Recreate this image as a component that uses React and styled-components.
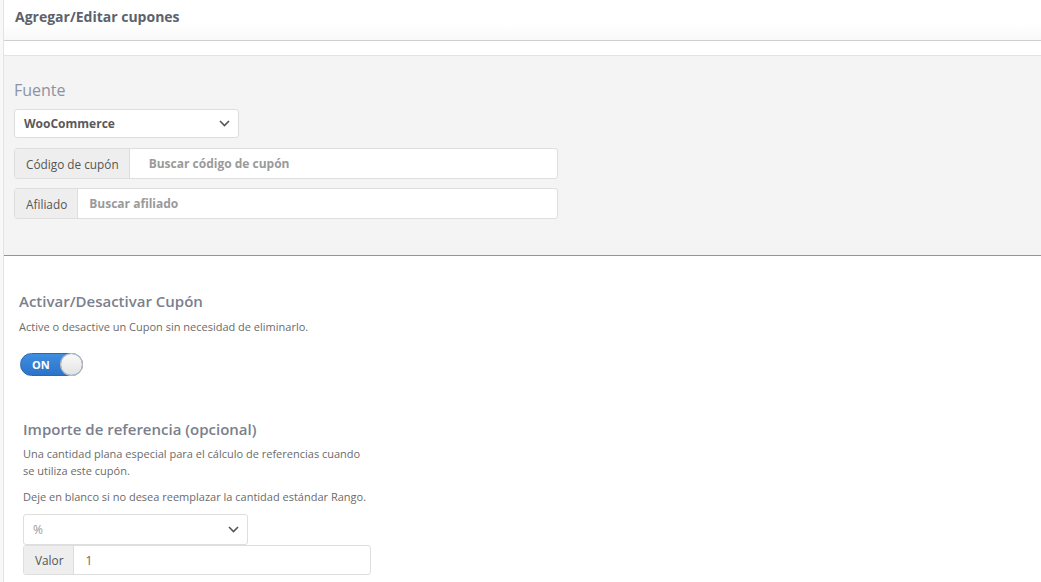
import React from "react";
import styled, { createGlobalStyle } from "styled-components";

const GlobalStyle = createGlobalStyle`
  body {
    margin: 0;
    background: #f8f8f8;
    font-family: "Open Sans", "Liberation Sans", sans-serif;
    color: #555;
  }
`;

const Page = styled.div`
  margin-left: 3px;
  border-left: 1px solid #e3e3e3;
  background: #fff;
  min-height: 582px;
`;

const Header = styled.div`
  height: 41px;
  box-sizing: border-box;
  padding: 7px 11px 0;
  background: linear-gradient(#fff 60%, #f8f8f8);
  border-bottom: 1px solid #cfcfcf;
`;

const HeaderTitle = styled.h3`
  margin: 0;
  font-size: 14px;
  font-weight: 700;
  color: #5b626c;
`;

const Spacer = styled.div`
  height: 14px;
  border-bottom: 1px solid #e3e3e3;
`;

const GraySection = styled.div`
  background: #f4f4f4;
  padding: 22px 10px 36px;
  border-bottom: 1px solid #3fb6c3;
`;

const SourceLabel = styled.div`
  font-size: 16px;
  font-weight: 400;
  color: #8b93a3;
  line-height: 24px;
  margin-bottom: 7px;
`;

const SelectBox = styled.div`
  display: flex;
  align-items: center;
  justify-content: space-between;
  box-sizing: border-box;
  width: ${(p) => p.$width}px;
  height: ${(p) => p.$height}px;
  padding: 0 8px 0 9px;
  background: #fff;
  border: 1px solid #dedede;
  border-radius: 3px;
  font-size: 12px;
  font-weight: ${(p) => (p.$bold ? 700 : 400)};
  color: ${(p) => (p.$bold ? "#5a5a5a" : "#999")};
`;

const Chevron = () => (
  <svg width="11" height="7" viewBox="0 0 11 7">
    <path d="M1 1l4.5 4.5L10 1" fill="none" stroke="#555" strokeWidth="1.6" />
  </svg>
);

const InputGroup = styled.div`
  display: flex;
  box-sizing: border-box;
  width: ${(p) => p.$width}px;
  height: ${(p) => p.$height || 31}px;
  margin-top: ${(p) => p.$top}px;
  border: 1px solid #dedede;
  border-radius: 3px;
  background: #fff;
  overflow: hidden;
`;

const Addon = styled.div`
  display: flex;
  align-items: center;
  padding: 0 10px 0 11px;
  background: #eee;
  border-right: 1px solid #dedede;
  font-size: 11.8px;
  color: #555;
`;

const Field = styled.div`
  display: flex;
  align-items: center;
  padding-left: ${(p) => p.$pad}px;
  font-size: 12px;
  font-weight: ${(p) => (p.$value ? 400 : 700)};
  color: ${(p) => (p.$value ? "#666" : "#9a9a9a")};
`;

const WhiteSection = styled.div`
  padding: 34px 15px 0;
`;

const Block = styled.div`
  padding-left: ${(p) => p.$indent || 0}px;
  margin-bottom: ${(p) => p.$bottom || 0}px;
`;

const BlockTitle = styled.h4`
  margin: 0 0 ${(p) => p.$gap}px;
  font-size: 15px;
  font-weight: 600;
  line-height: 22px;
  color: #7a808d;
`;

const Help = styled.p`
  margin: 0 0 ${(p) => p.$bottom || 0}px;
  max-width: 350px;
  font-size: 11px;
  line-height: 17px;
  color: #6b6b6b;
`;

const Switch = styled.div`
  position: relative;
  display: flex;
  align-items: center;
  box-sizing: border-box;
  width: 63px;
  height: 23px;
  margin: 18px 0 0 1px;
  padding-left: 11px;
  border-radius: 12px;
  border: 1px solid #2a68b4;
  background: linear-gradient(#3f8ee0, #2b73c9);
  font-size: 11px;
  font-weight: 700;
  color: #fff;
`;

const Knob = styled.span`
  position: absolute;
  right: 0;
  top: 0;
  width: 21px;
  height: 21px;
  border-radius: 50%;
  background: linear-gradient(#fafafa, #e2e2e2);
  box-shadow: 0 0 0 1px #b9b9b9;
`;

export default function App() {
  return (
    <>
      <GlobalStyle />
      <Page>
        <Header>
          <HeaderTitle>Agregar/Editar cupones</HeaderTitle>
        </Header>
        <Spacer />
        <GraySection>
          <SourceLabel>Fuente</SourceLabel>
          <SelectBox $width={225} $height={29} $bold>
            WooCommerce
            <Chevron />
          </SelectBox>
          <InputGroup $width={544} $top={10}>
            <Addon>Código de cupón</Addon>
            <Field $pad={19}>Buscar código de cupón</Field>
          </InputGroup>
          <InputGroup $width={544} $top={9}>
            <Addon>Afiliado</Addon>
            <Field $pad={11}>Buscar afiliado</Field>
          </InputGroup>
        </GraySection>
        <WhiteSection>
          <Block $bottom={42}>
            <BlockTitle $gap={6}>Activar/Desactivar Cupón</BlockTitle>
            <Help>Active o desactive un Cupon sin necesidad de eliminarlo.</Help>
            <Switch>
              ON
              <Knob />
            </Switch>
          </Block>
          <Block $indent={4}>
            <BlockTitle $gap={5}>Importe de referencia (opcional)</BlockTitle>
            <Help $bottom={9}>
              Una cantidad plana especial para el cálculo de referencias cuando
              se utiliza este cupón.
            </Help>
            <Help $bottom={9}>
              Deje en blanco si no desea reemplazar la cantidad estándar Rango.
            </Help>
            <SelectBox $width={225} $height={31}>
              %
              <Chevron />
            </SelectBox>
            <InputGroup $width={348} $height={30} $top={0}>
              <Addon>Valor</Addon>
              <Field $value $pad={11}>
                1
              </Field>
            </InputGroup>
          </Block>
        </WhiteSection>
      </Page>
    </>
  );
}
